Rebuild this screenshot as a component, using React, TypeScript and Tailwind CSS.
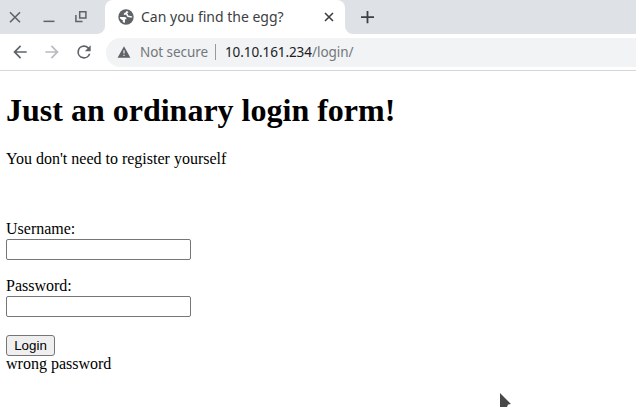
import type { ReactNode } from "react";

function Icon({ size, box = 24, className, children }: { size: number; box?: number; className?: string; children: ReactNode }) {
  return (
    <svg width={size} height={size} viewBox={`0 0 ${box} ${box}`} className={`shrink-0 ${className ?? ""}`} fill="currentColor" aria-hidden="true">
      {children}
    </svg>
  );
}

function TabStrip() {
  return (
    <div className="flex h-[34px] bg-white">
      <div className="flex w-[105px] shrink-0 items-center gap-4 rounded-br-lg bg-[#dee1e6] pb-[2px] pl-[7px] text-[#5f6368]">
        <Icon size={16} box={16}>
          <path d="M3 4l10 10M13 4L3 14" transform="translate(0 .2)" fill="none" stroke="currentColor" strokeWidth="1.6" />
        </Icon>
        <Icon size={16} box={16} className="ml-[2px]">
          <path d="M2.5 12.6h11v1.5h-11z" />
        </Icon>
        <Icon size={16} box={16}>
          <path d="M6.7 3.7h6.2v6.2H6.7zM2.9 7v6.5h6.6" fill="none" stroke="currentColor" strokeWidth="1.5" />
        </Icon>
      </div>
      <div className="w-60 shrink-0 bg-[#dee1e6]">
        <div className="flex h-full items-center rounded-t-lg bg-white pl-3">
          <Icon size={16} box={16} className="mx-px">
            <circle cx="8" cy="8" r="7.7" fill="#5f6368" />
            <path d="M1.8 8h4.4c1.7 0 2.5.9 2.3 2.3H7v3.5c-.9-.1-1.7-.4-2.4-.9L5 11.5 2.3 9.8z" fill="white" />
            <path d="M8.9 1.9c-1.1.5-1.2 1-1.2 1.6-1.5.1-2 .9-1.9 2.3h2.6c.1 1.7 1 2.4 2.4 2.4 1.1 0 1.8.5 3.4.4l-.1-1.3c-1.5 0-2-.5-3.2-.5-.8-.1-1-.7-1-1.5l-.8-.8 1.5-1.4z" fill="white" />
          </Icon>
          <span className="ml-[6px] w-[143px] whitespace-nowrap font-['Noto_Sans',sans-serif] text-[14px] leading-5 text-[#3c4043]">Can you find the egg?</span>
          <Icon size={16} box={16} className="ml-[37px] text-[#3c4043]">
            <path d="M4 4l8 8M12 4l-8 8" fill="none" stroke="currentColor" strokeWidth="1.6" />
          </Icon>
        </div>
      </div>
      <div className="flex grow items-center rounded-bl-lg bg-[#dee1e6] pb-[2px] pl-[14px]">
        <Icon size={16} box={16} className="text-[#3c4043]">
          <path d="M7.6 2.9h1.8v5.3H15V10H9.4v5.3H7.6V10H2V8.2h5.6z" />
        </Icon>
      </div>
    </div>
  );
}

function Toolbar() {
  return (
    <div className="flex h-[37px] border-b border-[#d5d6d8] bg-white pt-1 font-['Noto_Sans',sans-serif]">
      <div className="flex h-[29px] w-[106px] shrink-0 items-center gap-3 pb-px pl-[10px] text-[#5f6368]">
        <Icon size={20}>
          <path d="M20 11H7.83l5.59-5.59L12 4l-8 8 8 8 1.41-1.41L7.83 13H20z" />
        </Icon>
        <Icon size={20} className="text-[#b9bbbe]">
          <path d="M12 4l-1.41 1.41L16.17 11H4v2h12.17l-5.58 5.59L12 20l8-8z" />
        </Icon>
        <Icon size={20}>
          <path d="M17.65 6.35A7.96 7.96 0 0 0 12 4a8 8 0 1 0 7.73 10h-2.08A6 6 0 1 1 12 6c1.66 0 3.14.69 4.22 1.78L13 11h7V4z" />
        </Icon>
      </div>
      <div className="flex h-[29px] grow items-center whitespace-nowrap rounded-l-full bg-[#f1f3f4] pb-px pl-[11px] text-[14px] leading-5">
        <Icon size={14} className="text-[#5f6368]">
          <path d="M1 22h22L12 2 1 22zm12-3h-2v-2.5h2V19zm0-4.5h-2V9h2v5.5z" />
        </Icon>
        <span className="ml-[9px] w-[75px] text-[13.5px] tracking-[-0.05px] text-[#74777b]">Not secure</span>
        <span className="h-4 w-px bg-[#96999d]" />
        <span className="ml-[9px] w-[87px] text-[13.5px] tracking-[-0.1px] text-[#202124]">10.10.161.234</span>
        <span className="text-[13.5px] tracking-[-0.05px] text-[#74777b]">/login/</span>
      </div>
    </div>
  );
}

function Field({ label, type }: { label: string; type: string }) {
  return (
    <label className="mb-[17px] flex flex-col items-start">
      <span className="h-[18px]">{label}</span>
      <input type={type} className="mt-px h-[21px] w-[185px] rounded-[2px] border border-[#767676] bg-white px-[2px]" />
    </label>
  );
}

export default function App() {
  return (
    <div className="relative h-[407px] w-[636px] overflow-hidden bg-white text-black">
      <TabStrip />
      <Toolbar />
      <main className="pl-[6px] pt-[21px] font-['Liberation_Serif',serif] text-[16px] leading-[18px]">
        <h1 className="text-[32px] font-bold leading-[37px]">Just an ordinary login form!</h1>
        <p className="mt-[21px]">You don't need to register yourself</p>
        <form className="mt-[52px]" onSubmit={(e) => e.preventDefault()}>
          <Field label="Username:" type="text" />
          <Field label="Password:" type="password" />
          <button className="mt-[18px] block h-[21px] w-[49px] rounded-[3px] border border-[#767676] bg-[#efefef] font-['Liberation_Sans',sans-serif] text-[13.333px] leading-[19px]">Login</button>
        </form>
        <p className="-mt-px">wrong password</p>
      </main>
      <svg width="14" height="15" viewBox="0 0 14 15" className="absolute left-[499px] top-[392px]" aria-hidden="true">
        <path d="M1 1v14h7l1-2.5 3-.5z" fill="#484848" />
      </svg>
    </div>
  );
}
